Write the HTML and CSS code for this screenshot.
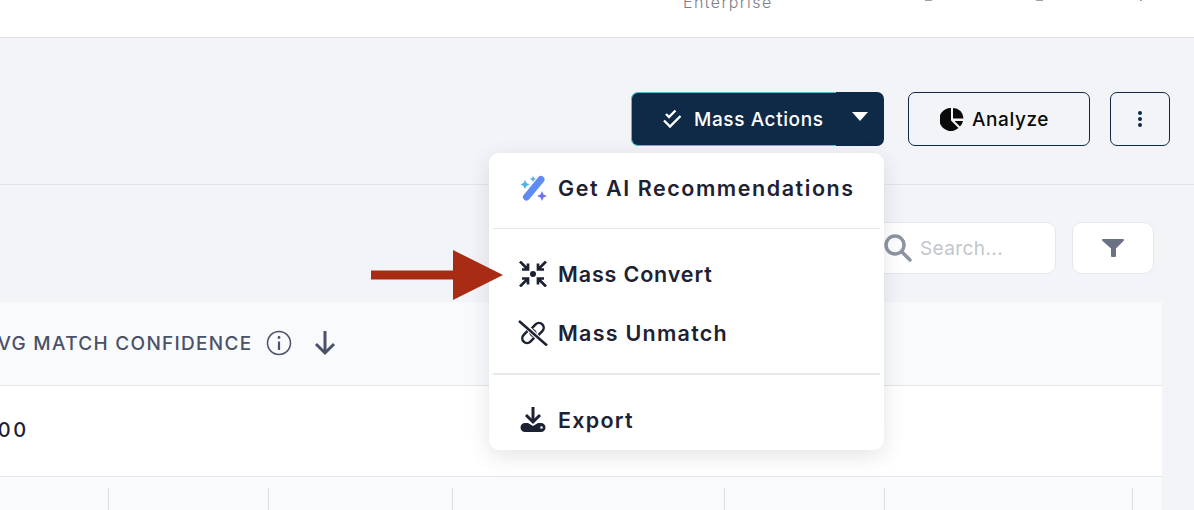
FILE: index.html
```html
<!DOCTYPE html>
<html lang="en">
<head>
    <meta charset="UTF-8">
    <title>Mass Actions</title>
    <link rel="stylesheet" href="styles.css">
</head>
<body>
    <header class="topbar">
        <span class="plan">Enterprise</span>
        <span class="top-icon first"></span>
        <span class="top-icon second"></span>
        <span class="top-icon third"></span>
    </header>

    <section class="toolbar">
        <div class="split-btn">
            <button class="split-main">
                <svg class="icon-check" viewBox="0 0 20 20" width="20" height="20" fill="none" stroke="#fff" stroke-width="2.4"><path d="M4 5 7 8 13.500 1.500"/><path d="M2 11.500 8 17.500 18.500 7"/></svg>
                Mass Actions
            </button>
            <button class="split-caret"><span class="caret"></span></button>
        </div>
        <button class="outline-btn analyze">
            <svg viewBox="0 0 24 24" width="24" height="24" fill="#0a0a0a"><path d="M11 1A11.500 11.500 0 1 0 18.500 21L11 13.500z"/><path d="M13 1v10.500h10.500A10.500 10.500 0 0 0 13 1z"/><path d="M14.500 14H23a11 11 0 0 1-3 5.500z"/></svg>
            Analyze
        </button>
        <button class="outline-btn more">
            <svg viewBox="0 0 6 20" width="6" height="20" fill="#0f2a47"><circle cx="3" cy="4" r="2"/><circle cx="3" cy="10" r="2"/><circle cx="3" cy="16" r="2"/></svg>
        </button>
    </section>

    <section class="panel">
        <div class="filters">
            <div class="search">
                <svg viewBox="0 0 28 28" width="28" height="28" fill="none" stroke="#8f94a3" stroke-width="3.5" stroke-linecap="round"><circle cx="11" cy="11" r="9"/><path d="m18 18 8 8"/></svg>
                <span>Search...</span>
            </div>
            <button class="filter-btn">
                <svg viewBox="0 0 22 18" width="22" height="18" fill="#6b7085"><path d="M1 0h20a1 1 0 0 1 .7 1.700L14 9.500V17a1 1 0 0 1-1 1H10a1 1 0 0 1-1-1V9.500L.3 1.700A1 1 0 0 1 1 0z"/></svg>
            </button>
        </div>
        <div class="table-head">
            <span class="col-title">AVG MATCH CONFIDENCE</span>
            <svg class="info" viewBox="0 0 26 26" width="26" height="26" fill="none" stroke="#4a5168" stroke-width="1.5"><circle cx="13" cy="13" r="11.500"/><path d="M13 11.500V20" stroke-width="2.2"/><circle cx="13" cy="7.500" r="1.400" fill="#4a5168" stroke="none"/></svg>
            <svg class="sort" viewBox="0 0 24 26" width="24" height="26" fill="none" stroke="#4a5168" stroke-width="3"><path d="M12 1v22"/><path d="M3 14l9 9 9-9"/></svg>
        </div>
        <div class="table-row">
            <span class="value">100</span>
        </div>
        <div class="sub-row">
            <span class="cell w108"></span>
            <span class="cell w160"></span>
            <span class="cell w184"></span>
            <span class="cell w272"></span>
            <span class="cell w160"></span>
            <span class="cell w248"></span>
        </div>
    </section>

    <div class="menu">
        <div class="menu-group ai">
            <div class="menu-item wide">
                <svg viewBox="0 0 30 28" width="30" height="28">
                    <path d="M8.500 23 23 5.500" stroke="#5f8bf5" stroke-width="7" stroke-linecap="round"/>
                    <path d="M7 6l1.500 3 3 1.500-3 1.500L7 15l-1.500-3-3-1.500 3-1.500z" fill="#4fb3e8"/>
                    <path d="M15 2l1 2 2 1-2 1-1 2-1-2-2-1 2-1z" fill="#4fb3e8"/>
                    <path d="M24 17l1.500 3.500 3.500 1.500-3.500 1.500L24 27l-1.500-3.500L19 22l3.500-1.500z" fill="#6b73f2"/>
                </svg>
                Get AI Recommendations
            </div>
        </div>
        <div class="menu-group mid">
            <div class="menu-item tight">
                <svg viewBox="0 0 30 26" width="30" height="26" fill="none" stroke="#1d2233" stroke-width="2.7">
                    <path d="M2 .5l8 8M4 8.500h6v-6"/>
                    <path d="M28 .5l-8 8M26 8.500h-6v-6"/>
                    <path d="M2 25.500l8-8M4 17.500h6v6"/>
                    <path d="M28 25.500l-8-8M26 17.500h-6v6"/>
                    <circle cx="15" cy="13" r="3" fill="#1d2233" stroke="none"/>
                </svg>
                Mass Convert
            </div>
            <div class="menu-item">
                <svg viewBox="0 0 30 26" width="30" height="26" fill="none" stroke="#1d2233" stroke-width="2.5">
                    <rect x="11.500" y="5" width="15" height="9.500" rx="4.750" transform="rotate(-45 19 9.750)"/>
                    <rect x="3.500" y="11.500" width="15" height="9.500" rx="4.750" transform="rotate(-45 11 16.250)"/>
                    <path d="M1 -1 29 27" stroke="#fff" stroke-width="5"/>
                    <path d="M1 1 29 25.500"/>
                </svg>
                Mass Unmatch
            </div>
        </div>
        <div class="menu-group last">
            <div class="menu-item">
                <svg viewBox="0 0 30 26" width="30" height="26" fill="#1d2233">
                    <path d="M15 0v14" stroke="#1d2233" stroke-width="3"/>
                    <path d="M8 8l7 7 7-7" stroke="#1d2233" stroke-width="3" fill="none"/>
                    <path d="M7 16h3l5 3 5-3h3a4.500 4.500 0 0 1 0 9H7a4.500 4.500 0 0 1 0-9z"/>
                    <circle cx="23.500" cy="20.500" r="1.300" fill="#fff"/>
                </svg>
                Export
            </div>
        </div>
    </div>

    <svg class="pointer" viewBox="0 0 132 50" width="132" height="50" fill="#a82c14">
        <path d="M0 20.500h82V0l50 25-50 25V29.500H0z"/>
    </svg>
</body>
</html>
```

FILE: styles.css
```css
* {
    box-sizing: border-box;
}
html, body {
    height: 510px;
    overflow: hidden;
}
body {
    margin: 0;
    position: relative;
    background-color: #f3f4f8;
    font-family: Inter, "Open Sans", sans-serif;
    color: #1d2233;
}
button {
    font-family: inherit;
    cursor: pointer;
}

.topbar {
    height: 38px;
    background-color: #fff;
    border-bottom: 1px solid #e2e3e9;
    padding-left: 683px;
    display: flex;
    align-items: flex-start;
    overflow: hidden;
}
.plan {
    width: 242px;
    margin-top: -7px;
    font-size: 16px;
    line-height: 18px;
    font-weight: 300;
    letter-spacing: 1.4px;
    color: #7d8088;
}
.top-icon {
    width: 7px;
    height: 1px;
    background-color: #a0a2a8;
}
.second {
    margin-left: 104px;
}
.third {
    width: 2px;
    margin-left: 97px;
}

.toolbar {
    height: 147px;
    border-bottom: 1px solid #e2e3e9;
    padding: 54px 24px 0 631px;
    display: flex;
    align-items: flex-start;
}
.split-btn {
    display: flex;
    height: 54px;
}
.split-main {
    width: 205px;
    border: 1px solid #4fc0cc;
    border-right: 0;
    border-radius: 7px 0 0 7px;
    background-color: #0f2a47;
    color: #fff;
    font-size: 19px;
    font-weight: 500;
    letter-spacing: 0.6px;
    display: flex;
    align-items: center;
    gap: 12px;
    padding: 0 0 0 30px;
}
.split-caret {
    width: 48px;
    border: 0;
    border-radius: 0 7px 7px 0;
    background-color: #0f2a47;
    padding: 0 0 5px 0;
    display: flex;
    justify-content: center;
    align-items: center;
}
.caret {
    width: 0;
    height: 0;
    border-left: 8px solid transparent;
    border-right: 8px solid transparent;
    border-top: 9px solid #fff;
}
.outline-btn {
    height: 54px;
    border: 1px solid #0f2a47;
    border-radius: 7px;
    background-color: transparent;
    display: flex;
    align-items: center;
    justify-content: center;
}
.analyze {
    width: 182px;
    margin-left: 24px;
    padding-right: 15px;
    gap: 8px;
    font-size: 19px;
    font-weight: 500;
    letter-spacing: 0.6px;
    color: #0a0a0a;
}
.more {
    width: 60px;
    margin-left: 20px;
}

.panel {
    width: 1162px;
}
.filters {
    height: 117px;
    padding: 37px 8px 0 0;
    display: flex;
    justify-content: flex-end;
    align-items: flex-start;
    gap: 16px;
}
.search {
    width: 190px;
    height: 52px;
    background-color: #fff;
    border: 1px solid #e6e7ec;
    border-radius: 10px;
    display: flex;
    align-items: center;
    gap: 8px;
    padding-left: 17px;
    color: #c3c6ce;
    font-size: 19px;
    letter-spacing: 0.4px;
}
.filter-btn {
    width: 82px;
    height: 52px;
    background-color: #fff;
    border: 1px solid #e6e7ec;
    border-radius: 10px;
    display: flex;
    align-items: center;
    justify-content: center;
}
.table-head {
    height: 84px;
    background-color: #f9fafc;
    border-bottom: 1px solid #e4e5ea;
    display: flex;
    align-items: center;
    overflow: hidden;
    padding-bottom: 1px;
    color: #4a5168;
}
.col-title {
    flex-shrink: 0;
    margin-left: -16px;
    width: 268px;
    white-space: nowrap;
    font-size: 19px;
    font-weight: 500;
    letter-spacing: 1.3px;
}
.info {
    margin-left: 14px;
}
.sort {
    margin-left: 21px;
}
.table-row {
    height: 91px;
    background-color: #fff;
    border-bottom: 1px solid #e4e5ea;
    display: flex;
    align-items: center;
    overflow: hidden;
    padding-bottom: 2px;
}
.value {
    flex-shrink: 0;
    font-size: 20px;
    letter-spacing: 2.5px;
    margin-left: -13px;
    color: #1d2233;
    font-weight: 500;
}
.sub-row {
    height: 33px;
    background-color: #f9fafc;
    display: flex;
    padding-top: 11px;
}
.cell {
    height: 22px;
    border-right: 1px solid #dcdde2;
}
.w108 { width: 109px; }
.w160 { width: 160px; }
.w184 { width: 184px; }
.w272 { width: 272px; }
.w248 { width: 248px; }

.menu {
    position: absolute;
    left: 489px;
    top: 153px;
    width: 395px;
    height: 297px;
    background-color: #fff;
    border-radius: 10px;
    box-shadow: 0 6px 22px rgba(30, 35, 60, 0.12);
    padding: 0 4px;
}
.menu-group {
    display: flex;
    flex-direction: column;
}
.ai {
    height: 76px;
    justify-content: center;
    padding-bottom: 6px;
    border-bottom: 1px solid #e8e9ed;
}
.mid {
    height: 146px;
    padding-top: 15px;
    border-bottom: 2px solid #e8e9ed;
}
.menu-item {
    height: 59px;
    display: flex;
    align-items: center;
    gap: 10px;
    padding-left: 25px;
    font-size: 21.5px;
    font-weight: 600;
    letter-spacing: 1.25px;
    color: #1d2233;
    white-space: nowrap;
}
.wide {
    letter-spacing: 1.55px;
}
.tight {
    letter-spacing: 0.85px;
}
.last .menu-item {
    height: 90px;
}

.pointer {
    position: absolute;
    left: 371px;
    top: 250px;
}
```
